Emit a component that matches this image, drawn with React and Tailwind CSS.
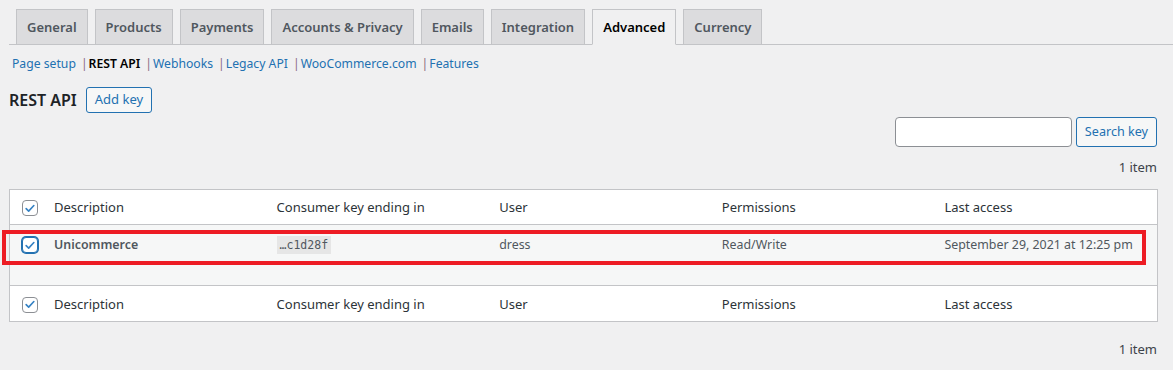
import React from "react";

const tabs = ["General", "Products", "Payments", "Accounts & Privacy", "Emails", "Integration", "Advanced", "Currency"];
const subs = ["Page setup", "REST API", "Webhooks", "Legacy API", "WooCommerce.com", "Features"];
const cols = ["Description", "Consumer key ending in", "User", "Permissions", "Last access"];

function Check({ focus }) {
  return (
    <span
      className={
        "flex h-4 w-4 items-center justify-center rounded-[4px] border bg-white " +
        (focus ? "border-[#2271b1] shadow-[0_0_0_1px_#2271b1]" : "border-[#8c8f94]")
      }
    >
      <svg viewBox="0 0 20 20" className="h-[15px] w-[15px]">
        <path d="M4.5 10.2l3.6 3.6 7.4-8" fill="none" stroke="#3582c4" strokeWidth="2.3" strokeLinecap="round" strokeLinejoin="round" />
      </svg>
    </span>
  );
}

function HeadRow({ top }) {
  return (
    <div className={"grid grid-cols-[34px_repeat(5,1fr)] h-[35px] items-center bg-white pt-[2px] " + (top ? "border-b border-[#c3c4c7]" : "")}>
      <div className="flex pl-3">
        <Check />
      </div>
      {cols.map((c) => (
        <div key={c} className="px-[10px] text-[13px] text-[#2c3338]">{c}</div>
      ))}
    </div>
  );
}

export default function App() {
  return (
    <div className="min-h-[370px] w-[1173px] bg-[#f0f0f1] text-[13px] text-[#3c434a]" style={{ fontFamily: '"Noto Sans", "Open Sans", sans-serif' }}>
      <div className="ml-[9px] flex border-b border-[#c3c4c7] pt-[9px]">
        {tabs.map((t) => (
          <div
            key={t}
            className={
              "ml-[7px] -mb-px h-[36px] border border-[#c3c4c7] px-[10px] text-[13px] font-semibold leading-[35px] " +
              (t === "Advanced" ? "border-b-[#f0f0f1] bg-[#f0f0f1] text-black" : "bg-[#dcdcde] text-[#50575e]")
            }
          >
            {t}
          </div>
        ))}
      </div>
      <div className="ml-3 mt-[10px] flex h-[18px] items-center text-[12.2px]">
        {subs.map((s, i) => (
          <React.Fragment key={s}>
            {i > 0 && <span className="ml-[5px] mr-px text-[#8a6d7f]">|</span>}
            <span className={s === "REST API" ? "font-semibold text-black" : "text-[#2271b1]"}>{s}</span>
          </React.Fragment>
        ))}
      </div>
      <div className="ml-[9px] mt-[14px] flex items-center">
        <span className="text-[16px] font-semibold text-[#1d2327]">REST API</span>
        <span className="ml-[9px] flex h-[26px] items-center rounded-[3px] border border-[#2271b1] bg-[#f6f7f7] px-[8px] text-[13px] text-[#2271b1]">Add key</span>
      </div>
      <div className="mr-4 mt-[4px] flex justify-end">
        <div className="h-[30px] w-[177px] rounded-[4px] border border-[#8c8f94] bg-white" />
        <span className="ml-[4px] flex h-[30px] items-center rounded-[3px] border border-[#2271b1] bg-[#f6f7f7] px-[8px] text-[12.6px] text-[#2271b1]">Search key</span>
      </div>
      <div className="mr-4 mt-[10px] text-right text-[13px] leading-[20px]">1 item</div>
      <div className="relative ml-[9px] mt-[12px] w-[1149px]">
        <div className="border border-[#c3c4c7]">
          <HeadRow top />
          <div className="grid h-[61px] grid-cols-[34px_repeat(5,1fr)] items-start border-b border-[#c3c4c7] bg-[#f6f7f7] pt-[11px] text-[12.4px] text-[#50575e]">
            <div className="flex pl-3 pt-[1px]">
              <Check focus />
            </div>
            <div className="px-[10px] font-semibold text-[#50575e]">Unicommerce</div>
            <div className="px-[10px]">
              <span className="bg-[#e6e6e6] px-[3px] py-[2px] text-[11.5px] text-[#50575e]" style={{ fontFamily: '"DejaVu Sans Mono", monospace' }}>…c1d28f</span>
            </div>
            <div className="px-[10px]">dress</div>
            <div className="px-[10px]">Read/Write</div>
            <div className="px-[10px]">September 29, 2021 at 12:25 pm</div>
          </div>
          <HeadRow />
        </div>
        <div className="pointer-events-none absolute left-[-7px] top-[41px] h-[35px] w-[1144px] border-4 border-[#ed1c24]" />
      </div>
      <div className="mr-4 mt-[17px] pb-2 text-right text-[13px] leading-[20px]">1 item</div>
    </div>
  );
}
